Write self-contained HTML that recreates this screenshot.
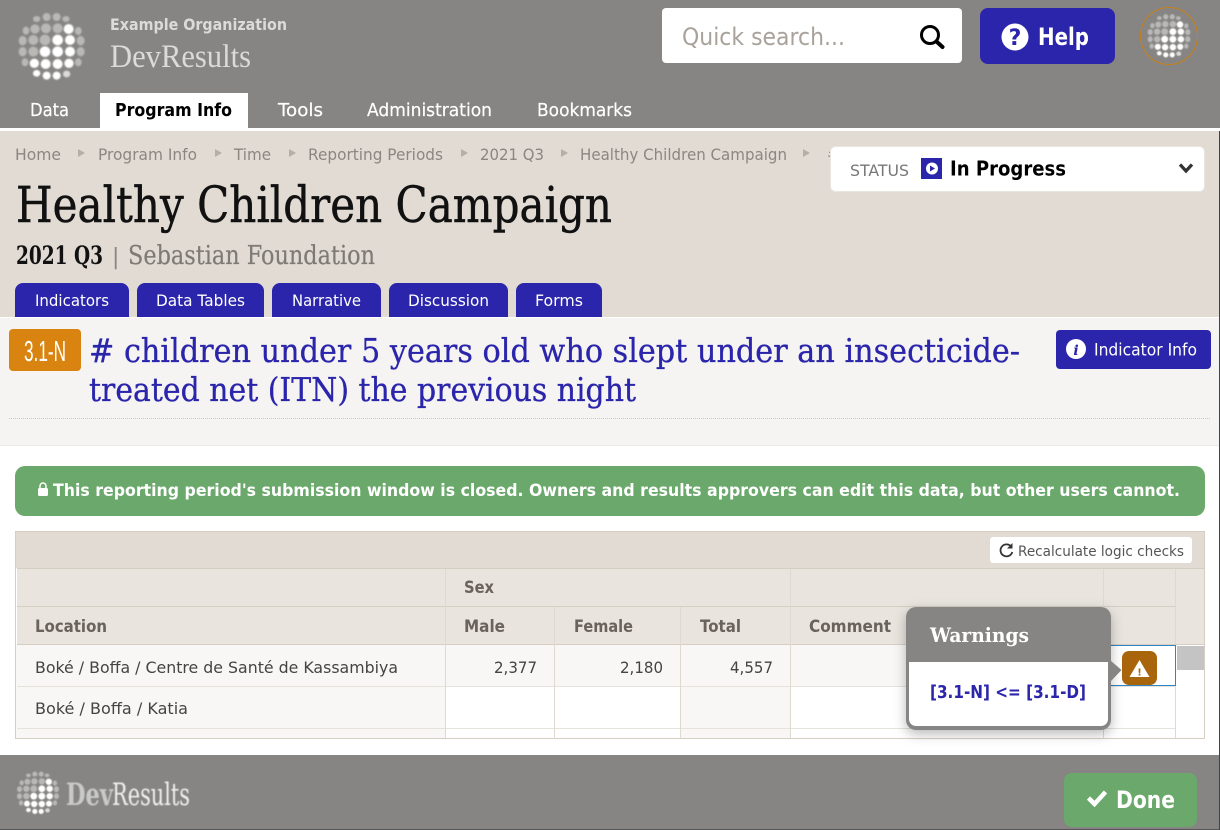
<!DOCTYPE html>
<html lang="en">
<head>
<meta charset="utf-8">
<title>DevResults - Healthy Children Campaign</title>
<style>
html,body{margin:0;padding:0;background:#fff;width:1220px;height:830px;overflow:hidden}
svg{display:block}
text{font-family:"DejaVu Sans","Liberation Sans",sans-serif;white-space:pre}
.b{font-weight:700}
.s{font-family:"DejaVu Serif","Liberation Serif",serif}
.l{font-family:"Liberation Serif",serif}
.n{font-family:"Liberation Sans",sans-serif}
</style>
</head>
<body>
<svg width="1220" height="830" viewBox="0 0 1220 830" xmlns="http://www.w3.org/2000/svg">
<defs>
<filter id="sh" x="-20%" y="-20%" width="140%" height="150%"><feDropShadow dx="0" dy="4" stdDeviation="6" flood-color="#000" flood-opacity=".28"/></filter>
<filter id="bl" x="-5%" y="-5%" width="110%" height="110%"><feGaussianBlur stdDeviation="2.500"/></filter>
<filter id="bl2" x="-5%" y="-5%" width="110%" height="110%"><feGaussianBlur stdDeviation=".45"/></filter>
<symbol id="globe" viewBox="0 0 250 250">
<g filter="url(#bl)" fill="#fff">
<g opacity=".42">
<ellipse cx="80" cy="42" rx="11" ry="9"/><circle cx="110" cy="36" r="12"/><circle cx="140" cy="36" r="12"/><ellipse cx="168" cy="42" rx="11" ry="9"/>
<ellipse cx="48" cy="77" rx="10" ry="12"/><circle cx="75" cy="72" r="14"/><circle cx="108" cy="70" r="15"/><circle cx="143" cy="70" r="15"/><ellipse cx="205" cy="78" rx="10" ry="12"/>
<ellipse cx="38" cy="107" rx="12" ry="14"/><circle cx="70" cy="105" r="15"/><circle cx="105" cy="105" r="16"/><ellipse cx="212" cy="107" rx="12" ry="14"/>
<ellipse cx="38" cy="140" rx="12" ry="14"/><circle cx="70" cy="140" r="15"/><ellipse cx="212" cy="140" rx="12" ry="14"/>
<ellipse cx="45" cy="172" rx="10" ry="12"/><ellipse cx="205" cy="172" rx="10" ry="12"/>
</g>
<circle cx="176" cy="72" r="15"/><circle cx="143" cy="105" r="16"/><circle cx="180" cy="105" r="15"/>
<circle cx="105" cy="140" r="16"/><circle cx="143" cy="140" r="16"/><circle cx="180" cy="140" r="15"/>
<circle cx="73" cy="175" r="14"/><circle cx="107" cy="177" r="15"/><circle cx="143" cy="177" r="15"/><circle cx="177" cy="175" r="14"/>
<ellipse cx="80" cy="205" rx="11" ry="10"/><circle cx="110" cy="212" r="12"/><circle cx="140" cy="212" r="12"/><ellipse cx="170" cy="207" rx="11" ry="10" opacity=".7"/>
</g>
</symbol>
</defs>

<!-- backgrounds -->
<rect width="1220" height="830" fill="#fff"/>
<rect width="1220" height="128" fill="#868583"/>
<rect y="131" width="1220" height="186" fill="#e2dbd4"/>
<rect y="318" width="1220" height="127" fill="#f5f4f2"/>
<rect y="445" width="1220" height="1" fill="#ece9e5"/>

<!-- header -->
<use href="#globe" x="10" y="5" width="83.3" height="83.3"/>
<text x="110" y="30" class="b" font-size="16" fill="#dcdbda" textLength="177" lengthAdjust="spacingAndGlyphs">Example Organization</text>
<text x="110" y="67" class="l" font-size="33" fill="#dcdbda" textLength="141" lengthAdjust="spacingAndGlyphs">DevResults</text>

<rect x="100" y="93" width="148" height="38" fill="#fff"/>
<text x="30" y="116" font-size="18" fill="#fff" stroke="#fff" stroke-width=".2" textLength="39" lengthAdjust="spacingAndGlyphs">Data</text>
<text x="115" y="116" class="b" font-size="18" fill="#000" textLength="117" lengthAdjust="spacingAndGlyphs">Program Info</text>
<text x="278" y="116" font-size="18" fill="#fff" stroke="#fff" stroke-width=".2" textLength="45" lengthAdjust="spacingAndGlyphs">Tools</text>
<text x="367" y="116" font-size="18" fill="#fff" stroke="#fff" stroke-width=".2" textLength="125" lengthAdjust="spacingAndGlyphs">Administration</text>
<text x="537" y="116" font-size="18" fill="#fff" stroke="#fff" stroke-width=".2" textLength="95" lengthAdjust="spacingAndGlyphs">Bookmarks</text>

<rect x="662" y="8" width="300" height="55" rx="4" fill="#fff"/>
<text x="682" y="45" font-size="24" fill="#a8a29b" textLength="163" lengthAdjust="spacingAndGlyphs">Quick search...</text>
<circle cx="930" cy="35" r="8.500" fill="none" stroke="#000" stroke-width="3"/>
<path d="M936.500 41.500L942.500 47" stroke="#000" stroke-width="4" stroke-linecap="round"/>

<rect x="980" y="8" width="135" height="56" rx="8" fill="#2a25ab"/>
<circle cx="1015" cy="37" r="13.500" fill="#fff"/>
<text x="1015" y="45" class="b" font-size="22" fill="#2a25ab" text-anchor="middle">?</text>
<text x="1038" y="45" class="b" font-size="24" fill="#fff" textLength="51" lengthAdjust="spacingAndGlyphs">Help</text>

<circle cx="1169" cy="36" r="28.500" fill="none" stroke="#c8801a" stroke-width="1"/>
<use href="#globe" x="1142" y="9" width="54" height="54"/>

<!-- breadcrumbs -->
<g font-size="16" fill="#8b8680">
<text x="15" y="160" textLength="46" lengthAdjust="spacingAndGlyphs">Home</text>
<text x="98" y="160" textLength="99" lengthAdjust="spacingAndGlyphs">Program Info</text>
<text x="234" y="160" textLength="37" lengthAdjust="spacingAndGlyphs">Time</text>
<text x="308" y="160" textLength="135" lengthAdjust="spacingAndGlyphs">Reporting Periods</text>
<text x="480" y="160" textLength="64" lengthAdjust="spacingAndGlyphs">2021 Q3</text>
<text x="580" y="160" textLength="207" lengthAdjust="spacingAndGlyphs">Healthy Children Campaign</text>
<text x="827" y="160">#</text>
</g>
<g fill="#b5afa7">
<path d="M78 149l7 4-7 4z"/><path d="M215 149l7 4-7 4z"/><path d="M289 149l7 4-7 4z"/><path d="M461 149l7 4-7 4z"/><path d="M561 149l7 4-7 4z"/><path d="M803 149l7 4-7 4z"/>
</g>

<!-- status -->
<rect x="830.500" y="146.500" width="374" height="45" rx="5" fill="#fff" stroke="#e9e5e0"/>
<text x="850" y="176" font-size="16" fill="#777" textLength="59" lengthAdjust="spacingAndGlyphs">STATUS</text>
<rect x="921" y="158" width="21" height="21" fill="#2a25ab"/>
<circle cx="932" cy="168.500" r="6" fill="#fff"/>
<path d="M930 165.500l5 3-5 3z" fill="#2a25ab"/>
<text x="950" y="175.500" class="b" font-size="20.500" fill="#000" textLength="116" lengthAdjust="spacingAndGlyphs">In Progress</text>
<path d="M1180 164.500l6 6.500 6-6.500" fill="none" stroke="#333" stroke-width="3.200"/>

<!-- title -->
<text x="16" y="222" class="s" font-size="50" fill="#111" stroke="#111" stroke-width=".5" textLength="596" lengthAdjust="spacingAndGlyphs">Healthy Children Campaign</text>
<text x="16" y="264" class="s b" font-size="25" fill="#111" textLength="87" lengthAdjust="spacingAndGlyphs">2021 Q3</text>
<text x="112" y="264" font-size="22" fill="#8b8680">|</text>
<text x="128" y="264" class="s" font-size="26" fill="#7e7a75" stroke="#7e7a75" stroke-width=".2" textLength="247" lengthAdjust="spacingAndGlyphs">Sebastian Foundation</text>

<!-- tabs -->
<g fill="#2a25ab">
<path d="M15 317v-26a8 8 0 0 1 8-8h98a8 8 0 0 1 8 8v26z"/>
<path d="M137 317v-26a8 8 0 0 1 8-8h111a8 8 0 0 1 8 8v26z"/>
<path d="M272 317v-26a8 8 0 0 1 8-8h93a8 8 0 0 1 8 8v26z"/>
<path d="M389 317v-26a8 8 0 0 1 8-8h103a8 8 0 0 1 8 8v26z"/>
<path d="M516 317v-26a8 8 0 0 1 8-8h70a8 8 0 0 1 8 8v26z"/>
</g>
<g font-size="16" fill="#fff">
<text x="35" y="306" textLength="74" lengthAdjust="spacingAndGlyphs">Indicators</text>
<text x="156" y="306" textLength="89" lengthAdjust="spacingAndGlyphs">Data Tables</text>
<text x="292" y="306" textLength="69" lengthAdjust="spacingAndGlyphs">Narrative</text>
<text x="408" y="306" textLength="81" lengthAdjust="spacingAndGlyphs">Discussion</text>
<text x="535" y="306" textLength="48" lengthAdjust="spacingAndGlyphs">Forms</text>
</g>

<!-- indicator heading -->
<rect x="9" y="329" width="72" height="42" rx="4" fill="#d98410"/>
<text x="24" y="361" class="n" font-size="29" fill="#fff" textLength="42" lengthAdjust="spacingAndGlyphs">3.1-N</text>
<text x="89" y="362" class="s" font-size="33" fill="#2a25ab" stroke="#2a25ab" stroke-width=".3" textLength="931" lengthAdjust="spacingAndGlyphs"># children under 5 years old who slept under an insecticide-</text>
<text x="89" y="401" class="s" font-size="33" fill="#2a25ab" stroke="#2a25ab" stroke-width=".3" textLength="547" lengthAdjust="spacingAndGlyphs">treated net (ITN) the previous night</text>
<rect x="1056" y="330" width="155" height="39" rx="4" fill="#2a25ab"/>
<circle cx="1076" cy="349" r="10" fill="#fff"/>
<text x="1076" y="355" class="s b" font-size="14" font-style="italic" fill="#2a25ab" text-anchor="middle">i</text>
<text x="1094" y="355.500" font-size="16.500" fill="#fff" textLength="103" lengthAdjust="spacingAndGlyphs">Indicator Info</text>
<line x1="9" y1="418.500" x2="1211" y2="418.500" stroke="#cfc9bc" stroke-dasharray="1 1"/>

<!-- alert -->
<rect x="15" y="466" width="1190" height="50" rx="10" fill="#6ba86b"/>
<rect x="38" y="488" width="10" height="8" rx="1.500" fill="#fff"/>
<path d="M40 488v-2a3 3 0 0 1 6 0v2" fill="none" stroke="#fff" stroke-width="1.500"/>
<text x="53" y="496" class="b" font-size="17" fill="#fff" textLength="1127" lengthAdjust="spacingAndGlyphs">This reporting period's submission window is closed. Owners and results approvers can edit this data, but other users cannot.</text>

<!-- table -->
<rect x="15.500" y="531.500" width="1189" height="207" fill="#fff" stroke="#d6cec3"/>
<rect x="16" y="532" width="1188" height="36" fill="#e2dbd4"/>
<rect x="16" y="568" width="1188" height="1" fill="#fff"/>
<rect x="17" y="569" width="1187" height="75" fill="#e9e4de"/>
<rect x="16" y="645" width="1160" height="41" fill="#f8f7f5"/>
<rect x="16" y="687" width="430" height="41" fill="#f8f7f5"/>
<rect x="681" y="687" width="109" height="41" fill="#f8f7f5"/>
<rect x="16" y="729" width="430" height="9" fill="#f8f7f5"/>
<rect x="681" y="729" width="109" height="9" fill="#f8f7f5"/>

<rect x="17" y="568" width="1187" height="1" fill="#d6cec3"/>
<rect x="17" y="606" width="1159" height="1" fill="#d6cec3"/>
<rect x="17" y="644" width="1187" height="1" fill="#d6cec3"/>
<rect x="17" y="686" width="1159" height="1" fill="#e6e2dc"/>
<rect x="17" y="728" width="1159" height="1" fill="#e6e2dc"/>
<g fill="#e0d9cf">
<rect x="445" y="569" width="1" height="169"/>
<rect x="554" y="607" width="1" height="131"/>
<rect x="680" y="607" width="1" height="131"/>
<rect x="790" y="569" width="1" height="169"/>
<rect x="1103" y="569" width="1" height="169"/>
<rect x="1175" y="569" width="1" height="169"/>
</g>
<rect x="1177" y="645" width="27" height="93" fill="#fff"/>
<rect x="1177" y="646" width="27" height="24" fill="#c4c4c4"/>
<rect x="1110.500" y="645.500" width="65" height="40" fill="#fff" stroke="#2f86c5"/>

<rect x="990" y="537" width="202" height="26" rx="3" fill="#fff"/>
<path d="M1011.500 547a6 6 0 1 0 .8 5" fill="none" stroke="#333" stroke-width="1.800"/>
<path d="M1012.500 543v5.500h-5.500z" fill="#333"/>
<text x="1018" y="556" font-size="14.500" fill="#555" textLength="166" lengthAdjust="spacingAndGlyphs">Recalculate logic checks</text>

<g class="b" font-size="16.500" fill="#6a625c">
<text x="464" y="593" textLength="30" lengthAdjust="spacingAndGlyphs">Sex</text>
<text x="35" y="632" textLength="72" lengthAdjust="spacingAndGlyphs">Location</text>
<text x="464" y="632" textLength="41" lengthAdjust="spacingAndGlyphs">Male</text>
<text x="574" y="632" textLength="59" lengthAdjust="spacingAndGlyphs">Female</text>
<text x="700" y="632" textLength="41" lengthAdjust="spacingAndGlyphs">Total</text>
<text x="809" y="632" textLength="82" lengthAdjust="spacingAndGlyphs">Comment</text>
</g>
<g font-size="16" fill="#444">
<text x="35" y="673" textLength="363" lengthAdjust="spacingAndGlyphs">Boké / Boffa / Centre de Santé de Kassambiya</text>
<text x="494" y="673" textLength="43" lengthAdjust="spacingAndGlyphs">2,377</text>
<text x="620" y="673" textLength="43" lengthAdjust="spacingAndGlyphs">2,180</text>
<text x="730" y="673" textLength="43" lengthAdjust="spacingAndGlyphs">4,557</text>
<text x="35" y="714" textLength="153" lengthAdjust="spacingAndGlyphs">Boké / Boffa / Katia</text>
</g>

<!-- warning button -->
<rect x="1122" y="651" width="35" height="34" rx="7" fill="#a9650c"/>
<path d="M1139.500 660l10 17h-20z" fill="#fff"/>
<text x="1139.500" y="675.500" class="b" font-size="10" fill="#a9650c" text-anchor="middle">!</text>

<!-- popover -->
<g filter="url(#sh)">
<rect x="906" y="607" width="205" height="123" rx="10" fill="#868583"/>
</g>
<path d="M1111 661l10.500 9-10.500 11z" fill="#868583"/>
<path d="M909 662h199v57a7 7 0 0 1-7 7h-185a7 7 0 0 1-7-7z" fill="#fff"/>
<text x="930" y="642" class="s b" font-size="20" fill="#fff" textLength="99" lengthAdjust="spacingAndGlyphs">Warnings</text>
<text x="930" y="698" class="b" font-size="18" fill="#2a25ab" textLength="156" lengthAdjust="spacingAndGlyphs">[3.1-N] &lt;= [3.1-D]</text>

<!-- footer -->
<rect y="755" width="1220" height="75" fill="#868583"/>
<rect y="829" width="1220" height="1" fill="#555"/>
<rect x="1219" y="131" width="1" height="699" fill="#444"/>
<use href="#globe" x="11.500" y="766.500" width="53" height="53"/>
<g filter="url(#bl2)">
<text x="66" y="805" class="s b" font-size="31" fill="#c9c9c8" textLength="47" lengthAdjust="spacingAndGlyphs">Dev</text>
<text x="112" y="805" class="s" font-size="31" fill="#efefef" textLength="78" lengthAdjust="spacingAndGlyphs">Results</text>
</g>
<rect x="1064" y="773" width="133" height="54" rx="8" fill="#6ba86b"/>
<path d="M1088.500 798l6 6 11-12" fill="none" stroke="#fff" stroke-width="4.500"/>
<text x="1116" y="808" class="b" font-size="24" fill="#fff" textLength="59" lengthAdjust="spacingAndGlyphs">Done</text>
</svg>
</body>
</html>
